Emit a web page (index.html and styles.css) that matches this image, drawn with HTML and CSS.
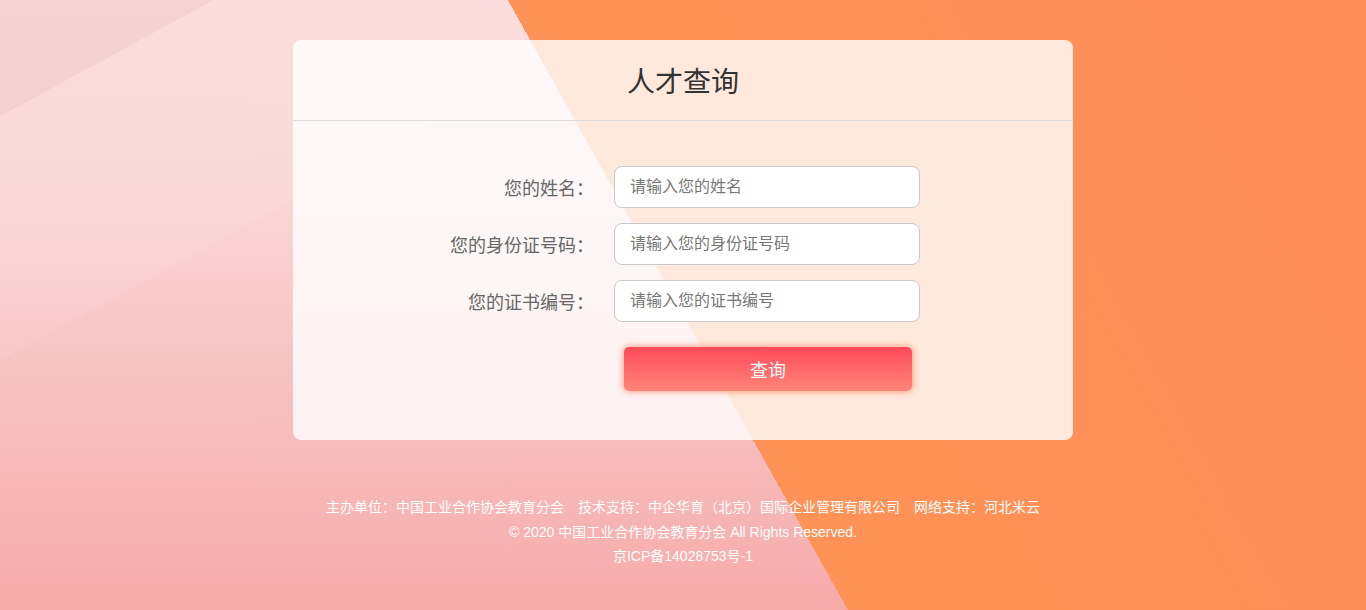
FILE: index.html
```html
<!DOCTYPE html>
<html lang="zh-CN">
<head>
<meta charset="utf-8">
<title>人才查询</title>
<link rel="stylesheet" href="styles.css">
</head>
<body>
<div class="page">
  <div class="card">
    <div class="card-head">人才查询</div>
    <form class="form" onsubmit="return false;">
      <label class="label" for="name">您的姓名：</label>
      <input class="field" id="name" type="text" placeholder="请输入您的姓名">
      <label class="label" for="idno">您的身份证号码：</label>
      <input class="field" id="idno" type="text" placeholder="请输入您的身份证号码">
      <label class="label" for="cert">您的证书编号：</label>
      <input class="field" id="cert" type="text" placeholder="请输入您的证书编号">
      <button class="btn" type="submit">查询</button>
    </form>
  </div>
  <div class="footer">
    <p class="line"><span class="item">主办单位：中国工业合作协会教育分会</span><span class="item">技术支持：中企华育（北京）国际企业管理有限公司</span><span class="item">网络支持：河北米云</span></p>
    <p class="line">© 2020 中国工业合作协会教育分会 All Rights Reserved.</p>
    <p class="line">京ICP备14028753号-1</p>
  </div>
</div>
</body>
</html>
```
FILE: styles.css
```css
html, body {
  margin: 0;
  padding: 0;
}
body {
  font-family: "Liberation Sans", "Noto Sans CJK SC", sans-serif;
}
.page {
  min-height: 100vh;
  box-sizing: border-box;
  padding-top: 40px;
  display: flex;
  flex-direction: column;
  align-items: center;
  background:
    linear-gradient(60.87deg, transparent 49.7%, #ff9256 49.7%, #ff8d5a 100%),
    linear-gradient(151.45deg, rgba(170,130,130,0.08) 0 8.6%, rgba(255,255,255,0.08) 8.6% 26.6%, transparent 26.6%),
    linear-gradient(to bottom, #fcd9d9 0%, #fbd4d4 35%, #f7c3c3 60%, #f7b4b4 85%, #f7aaaa 100%);
}
.card {
  width: 780px;
  box-sizing: border-box;
  padding-bottom: 49px;
  background: rgba(255,255,255,0.8);
  border-radius: 8px;
}
.card-head {
  height: 79px;
  padding-bottom: 1px;
  border-bottom: 1px solid #dcdcdc;
  display: flex;
  align-items: center;
  justify-content: center;
  font-size: 28px;
  color: #333;
}
.form {
  margin: 0;
  padding-top: 45px;
  display: grid;
  grid-template-columns: 301px 306px;
  column-gap: 20px;
  row-gap: 15px;
}
.label {
  font-size: 18px;
  color: #666;
  text-align: right;
  align-self: center;
  padding-bottom: 1px;
}
.field {
  height: 42px;
  box-sizing: border-box;
  border: 1px solid #c9c9c9;
  border-radius: 8px;
  padding: 0 15px;
  font-size: 16px;
  font-family: inherit;
  color: #333;
  background: #fff;
  outline: none;
}
.field::placeholder {
  color: #777;
}
.btn {
  grid-column: 2;
  justify-self: start;
  margin-top: 10px;
  margin-left: 10px;
  width: 288px;
  height: 44px;
  border: none;
  border-radius: 5px;
  background: linear-gradient(to bottom, #ff4a5a 0%, #ff6a6a 55%, #ff8579 100%);
  box-shadow: 0 0 6px 1px rgba(255,120,80,0.65);
  color: #fff;
  font-size: 18px;
  font-family: inherit;
  cursor: pointer;
}
.footer {
  margin-top: 55px;
  text-align: center;
  color: #fff;
  font-size: 14px;
  line-height: 24.5px;
}
.line {
  margin: 0;
}
.item + .item {
  margin-left: 14px;
}
```
